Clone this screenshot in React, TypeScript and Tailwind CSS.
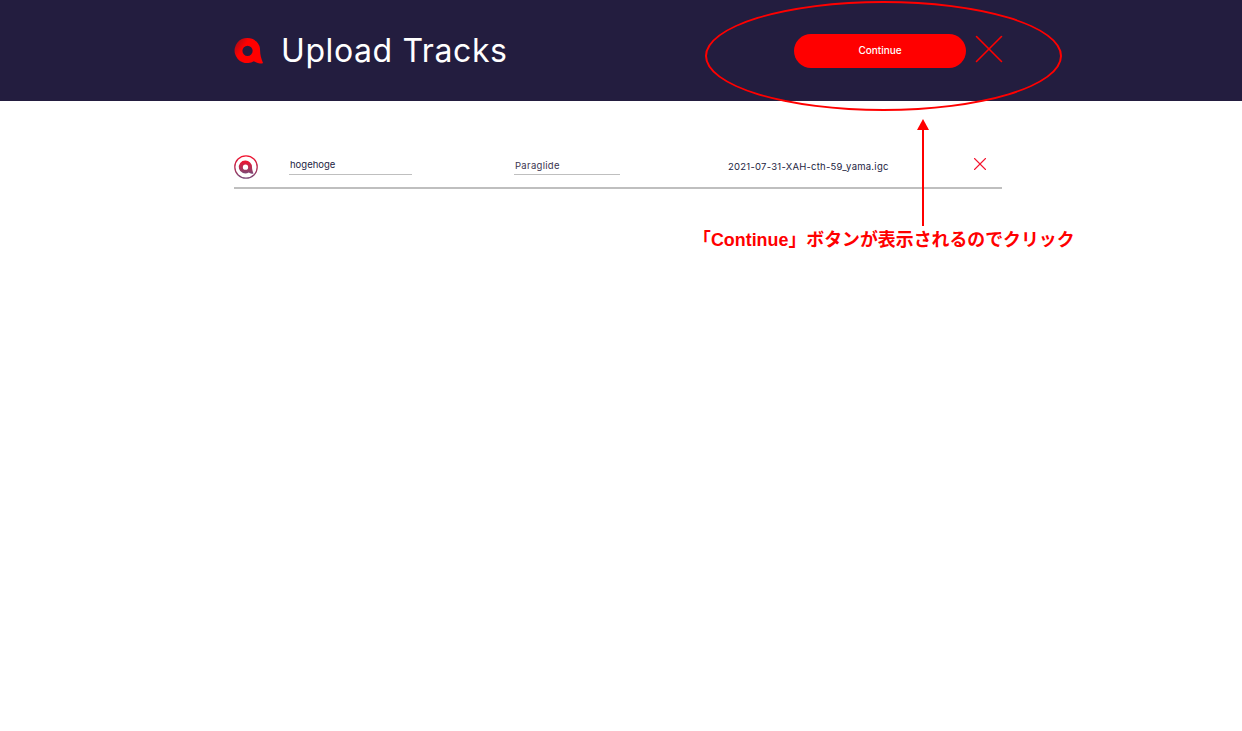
import { X } from 'lucide-react';

const sans = { fontFamily: 'Inter, "Liberation Sans", sans-serif' };

const logoPath =
  'M14 2a13 13 0 0 1 13 13c0 4 1 8 3 13l-1 .5c-3 0-6-1-8.500-2.500A13 13 0 1 1 14 2zm0 8a5.300 5.300 0 1 0 0 10.600A5.300 5.300 0 0 0 14 10z';

function Logo() {
  return (
    <svg width="29" height="29" viewBox="0 0 30 30">
      <defs>
        <linearGradient id="head-logo" x1="0" y1="0" x2="1" y2="0.6">
          <stop offset="0" stopColor="#8f0f1e" />
          <stop offset="0.4" stopColor="#ff0000" />
          <stop offset="1" stopColor="#ff0000" />
        </linearGradient>
      </defs>
      <path fillRule="evenodd" fill="url(#head-logo)" d={logoPath} />
    </svg>
  );
}

function RowLogo() {
  return (
    <svg width="24" height="24" viewBox="0 0 24 24" className="shrink-0">
      <defs>
        <linearGradient id="row-logo" x1="0" y1="0" x2="0" y2="1">
          <stop offset="0" stopColor="#f5102c" />
          <stop offset="1" stopColor="#7a4a78" />
        </linearGradient>
      </defs>
      <circle cx="12" cy="12" r="11.200" fill="none" stroke="url(#row-logo)" strokeWidth="1.300" />
      <g transform="translate(4.500 4.500) scale(0.5)">
        <path fillRule="evenodd" fill="url(#row-logo)" d={logoPath} />
      </g>
    </svg>
  );
}

export default function App() {
  return (
    <div className="relative h-[731px] w-[1242px] overflow-hidden bg-white" style={sans}>
      {/* Header */}
      <header className="h-[101px] bg-[#231d3f]">
        <div className="ml-[234px] flex h-full w-[768px] items-center justify-between">
          <div className="flex items-center gap-[18px]">
            <Logo />
            <h1 className="text-[32px] font-normal tracking-[0.6px] text-white">Upload Tracks</h1>
          </div>
          <div className="mr-[1px] flex items-center gap-[10px]">
            <button className="h-[34px] w-[172px] rounded-[17px] bg-[#ff0000] text-[10px] font-medium text-white">
              Continue
            </button>
            <X size={50} strokeWidth={1.6} absoluteStrokeWidth className="-mx-[12.500px] mb-[4px] text-[#ff0000]" />
          </div>
        </div>
      </header>

      {/* Track row */}
      <main className="ml-[234px] mt-[54px] flex h-[34px] w-[768px] items-start border-b-2 border-[#bfbfbf] text-[9.500px] text-[#231d3f]">
        <RowLogo />
        <div className="ml-[31px] h-[20px] w-[123px] border-b border-[#bfbfbf] pl-[1px] pt-[3px]">hogehoge</div>
        <div className="ml-[102px] h-[20px] w-[106px] border-b border-[#bfbfbf] pl-[1px] pt-[4px] tracking-[0.3px] text-[#3a3550]">
          Paraglide
        </div>
        <div className="ml-[108px] w-[160px] whitespace-nowrap pt-[5px] tracking-[0.24px]">
          2021-07-31-XAH-cth-59_yama.igc
        </div>
        <X size={22} strokeWidth={1.1} absoluteStrokeWidth color="#f5142e" className="-mt-[2px] ml-[81px]" />
      </main>

      {/* Annotation drawn over the page */}
      <div className="absolute left-[705px] top-[1px] h-[110px] w-[357px] rounded-[50%] border-2 border-[#ff0000]" />
      <div className="absolute left-[917px] top-[119px] h-0 w-0 border-x-[6px] border-b-[11px] border-x-transparent border-b-[#ff0000]" />
      <div className="absolute left-[922px] top-[129px] h-[97px] w-[2px] bg-[#ff0000]" />
      <p
        className="absolute left-[693px] top-[227px] whitespace-nowrap text-[17.900px] font-bold text-[#ff0000]"
        style={{ fontFamily: '"Liberation Sans", "Noto Sans CJK JP", sans-serif' }}
      >
        「Continue」ボタンが表示されるのでクリック
      </p>
    </div>
  );
}
